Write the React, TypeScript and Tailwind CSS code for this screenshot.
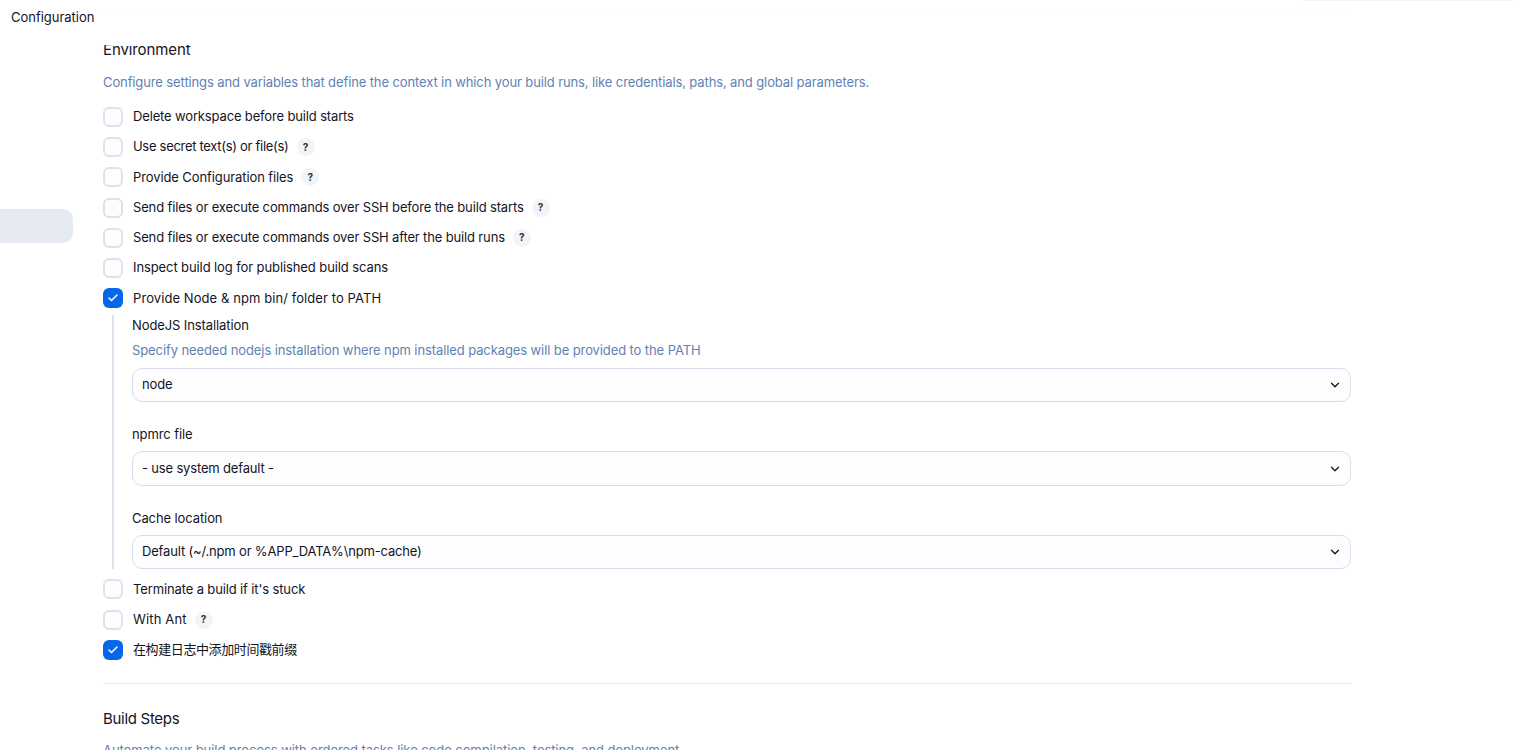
import React from 'react'
import { Check, ChevronDown } from 'lucide-react'

interface OptionProps {
  label: string
  checked?: boolean
  help?: boolean
  tracking?: string
}

interface SelectProps {
  label: string
  value: string
  hint?: string
}

const BEFORE_OPTIONS: OptionProps[] = [
  { label: 'Delete workspace before build starts', tracking: 'tracking-[-0.15px]' },
  { label: 'Use secret text(s) or file(s)', help: true, tracking: 'tracking-[-0.3px]' },
  { label: 'Provide Configuration files', help: true },
  { label: 'Send files or execute commands over SSH before the build starts', help: true, tracking: 'tracking-[-0.15px]' },
  { label: 'Send files or execute commands over SSH after the build runs', help: true, tracking: 'tracking-[-0.15px]' },
  { label: 'Inspect build log for published build scans' },
  { label: 'Provide Node & npm bin/ folder to PATH', checked: true, tracking: 'tracking-[0.08px]' }
]

const AFTER_OPTIONS: OptionProps[] = [
  { label: "Terminate a build if it's stuck", tracking: 'tracking-[-0.13px]' },
  { label: 'With Ant', help: true, tracking: 'tracking-[0.15px]' },
  { label: '在构建日志中添加时间戳前缀', checked: true, tracking: 'tracking-[-0.4px]' }
]

const Option: React.FC<OptionProps> = ({ label, checked, help, tracking = 'tracking-[-0.1px]' }) => (
  <div className="flex h-5 items-center">
    {checked ? (
      <div className="flex h-5 w-5 shrink-0 items-center justify-center rounded-md bg-[#0668e8]">
        <Check size={12} strokeWidth={3} className="text-white" />
      </div>
    ) : (
      <div className="h-5 w-5 shrink-0 rounded-md border-2 border-[#dbe3ef] bg-[#fdfdfe]"></div>
    )}
    <span className={`ml-2.5 text-[13px] text-[#14141f] ${tracking}`}>{label}</span>
    {help && (
      <span className="ml-2 flex h-[18px] w-[18px] items-center justify-center rounded-full bg-[#f1f4f8] text-[10px] font-bold text-[#333]">
        ?
      </span>
    )}
  </div>
)

const Select: React.FC<SelectProps> = ({ label, value, hint }) => (
  <div>
    <div className="text-[13px] leading-5 tracking-[-0.1px] text-[#14141f]">{label}</div>
    {hint && <div className="mt-[5px] text-[13px] leading-5 tracking-[-0.1px] text-[#5f82b3]">{hint}</div>}
    <div className={`flex h-[34.5px] items-center justify-between rounded-[10px] border border-[#d5deec] bg-[#fdfdfe] pl-[9px] pr-2 ${hint ? 'mt-2' : 'mt-[7px]'}`}>
      <span className="text-[13px] tracking-[-0.17px] text-[#14141f]">{value}</span>
      <ChevronDown size={14} strokeWidth={2.2} className="text-[#14141f]" />
    </div>
  </div>
)

const App: React.FC = () => {
  return (
    <div className="relative flex h-[750px] flex-col overflow-hidden bg-white font-['Inter','Noto_Sans_CJK_SC',sans-serif]">
      <div className="absolute right-0 top-0 h-px w-[211px] bg-[#f5f5f5]"></div>
      <div className="absolute left-[100px] top-[14px] h-px w-[1250px] bg-[#fafafa]"></div>

      <div className="flex h-[45px] shrink-0 items-start pl-[11px] pt-[9px]">
        <span className="text-[13px] leading-4 tracking-[-0.02px] text-[#14141f]">Configuration</span>
      </div>

      <div className="flex min-h-0 flex-1">
        <div className="w-[103px] shrink-0 pt-[164px]">
          <div className="h-[34px] w-[73px] rounded-r-[10px] bg-[#e6ebf3]"></div>
        </div>

        <div className="w-[1248px] shrink-0 overflow-hidden">
          <h2 className="-mt-[7px] text-[15px] leading-6 font-normal tracking-[-0.1px] text-[#14141f]">Environment</h2>
          <p className="mt-[10px] text-[13px] leading-5 tracking-[-0.115px] text-[#5f82b3]">
            Configure settings and variables that define the context in which your build runs, like credentials, paths, and global parameters.
          </p>

          <div className="mt-[14.9px] flex flex-col gap-[10.25px]">
            {BEFORE_OPTIONS.map((option) => (
              <Option key={option.label} {...option} />
            ))}
          </div>

          <div className="ml-[9px] mt-[6.4px] flex flex-col gap-[22px] border-l-2 border-[#dbe3ef] pl-[18px]">
            <Select
              label="NodeJS Installation"
              hint="Specify needed nodejs installation where npm installed packages will be provided to the PATH"
              value="node"
            />
            <Select label="npmrc file" value="- use system default -" />
            <Select label="Cache location" value="Default (~/.npm or %APP_DATA%\npm-cache)" />
          </div>

          <div className="mt-[10px] flex flex-col gap-[10.3px]">
            {AFTER_OPTIONS.map((option) => (
              <Option key={option.label} {...option} />
            ))}
          </div>

          <hr className="mt-[23px] border-[#e8ecf2]" />
          <h2 className="mt-[23px] text-[15px] leading-6 font-normal tracking-[-0.3px] text-[#14141f]">Build Steps</h2>
          <p className="mt-[9px] text-[13px] leading-5 tracking-[-0.07px] text-[#5f82b3]">
            Automate your build process with ordered tasks like code compilation, testing, and deployment.
          </p>
        </div>
      </div>
    </div>
  )
}

export default App
